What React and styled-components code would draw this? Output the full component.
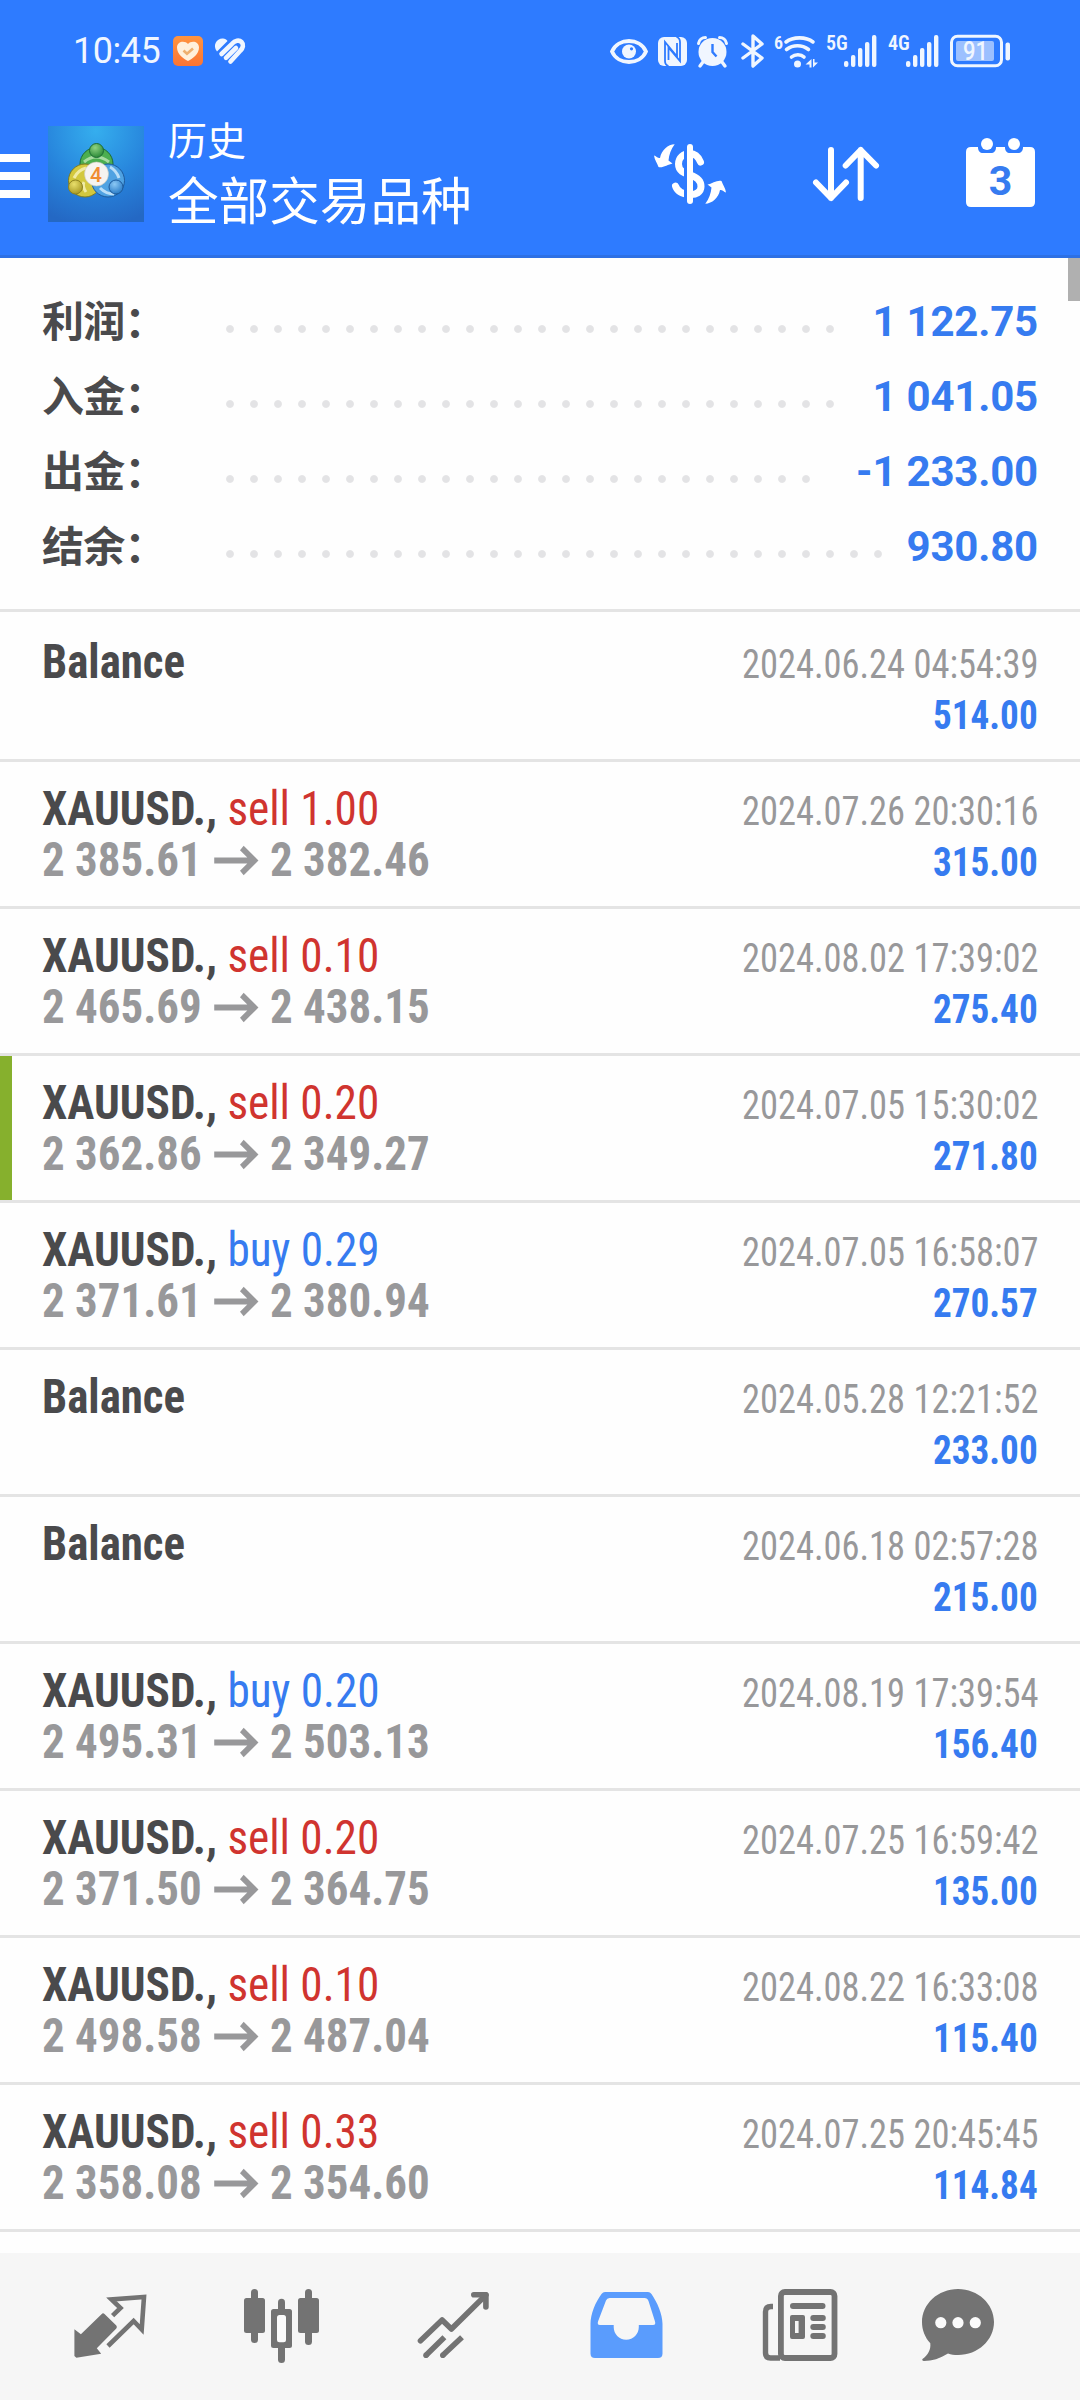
import styled, { createGlobalStyle } from "styled-components";

const GlobalStyle = createGlobalStyle`
  * {
    box-sizing: border-box;
  }
  body {
    margin: 0;
    background: #fefefe;
    font-family: Roboto, "Noto Sans CJK SC", sans-serif;
  }
  svg {
    display: block;
    flex-shrink: 0;
    overflow: visible;
  }
`;

const Page = styled.div`
  width: 1080px;
  height: 2400px;
  display: flex;
  flex-direction: column;
  overflow: hidden;
`;

/* header */
const Header = styled.header`
  height: 258px;
  background: #2e7bff;
  border-bottom: 3px solid #2d70e4;
  color: #fff;
`;
const StatusBar = styled.div`
  height: 102px;
  display: flex;
  align-items: center;
  justify-content: space-between;
  padding: 0 70px 0 73px;
  color: #f0f6ff;
`;
const StatusGroup = styled.div`
  display: flex;
  align-items: center;
  gap: ${(props) => props.$gap}px;
`;
const Clock = styled.span`
  width: 89px;
  font-size: 36px;
  line-height: 40px;
  letter-spacing: -0.5px;
  white-space: nowrap;
`;
const Toolbar = styled.div`
  height: 144px;
  display: flex;
  align-items: center;
  padding-right: 45px;
`;
const MenuButton = styled.div`
  width: 30px;
  height: 44px;
  margin: 4px 18px 0 0;
  display: flex;
  flex-direction: column;
  justify-content: space-between;
`;
const MenuLine = styled.span`
  height: 8px;
  background: #fff;
`;
const Titles = styled.div`
  display: flex;
  flex-direction: column;
  flex: 1;
  margin: 0 0 5px 24px;
  font-family: "Noto Sans CJK SC", sans-serif;
`;
const Title = styled.div`
  font-size: 39px;
  line-height: 52px;
  font-weight: 400;
`;
const Subtitle = styled.div`
  font-size: 50.6px;
  line-height: 68px;
  font-weight: 400;
`;
const Actions = styled.div`
  display: flex;
  align-items: center;
  gap: 87px;
`;

/* summary */
const Summary = styled.section`
  position: relative;
  height: 354px;
  padding: 26px 42px 0 42px;
  border-bottom: 3px solid #e4e4e4;
`;
const ScrollThumb = styled.div`
  position: absolute;
  top: 0;
  right: 0;
  width: 12px;
  height: 43px;
  background: #b0b0b0;
`;
const SummaryRow = styled.div`
  height: 75px;
  display: flex;
  align-items: center;
`;
const SummaryLabel = styled.div`
  width: 176px;
  padding-bottom: 6px;
  font-family: "Noto Sans CJK SC", sans-serif;
  font-size: 42px;
  line-height: 60px;
  letter-spacing: -0.7px;
  font-weight: 700;
  color: #4a4a4c;
`;
const Dots = styled.div`
  width: ${(props) => props.$count * 24}px;
  height: 10px;
  margin: 14px auto 0 0;
  background: radial-gradient(circle at center, #e3e3e5 3.4px, transparent 4.4px) 0 0 / 24px 10px;
`;
const SummaryValue = styled.div`
  font-size: 42px;
  line-height: 50px;
  letter-spacing: -0.2px;
  font-weight: 700;
  color: #367bf0;
`;

/* deals */
const List = styled.main`
  height: 1641px;
  flex-shrink: 0;
`;
const Deal = styled.article`
  height: ${(props) => (props.$first ? 150 : 147)}px;
  padding: ${(props) => (props.$first ? 21 : 18)}px 42px 0 42px;
  display: flex;
  justify-content: space-between;
  border-bottom: 3px solid #e4e4e4;
  background: ${(props) =>
    props.$marked ? "linear-gradient(to right, #86b02d 12px, transparent 12px)" : "none"};
`;
const Column = styled.div`
  display: flex;
  flex-direction: column;
  align-items: ${(props) => (props.$right ? "flex-end" : "flex-start")};
  font-stretch: 75%;
  white-space: pre;
`;
const Line = styled.div`
  line-height: 51px;
  transform: scaleX(${(props) => props.$squeeze});
  transform-origin: ${(props) => (props.$right ? "right" : "left")} center;
`;
const Symbol = styled(Line)`
  font-size: 48px;
  padding-top: 3px;
  font-weight: 700;
  color: #4a4a4c;
`;
const Side = styled.span`
  font-weight: 400;
  color: ${(props) => (props.$side === "buy" ? "#367bf0" : "#d0342f")};
`;
const Prices = styled(Line)`
  display: flex;
  align-items: center;
  gap: 13px;
  font-size: 48px;
  font-weight: 700;
  color: #98989a;
`;
const Time = styled(Line)`
  font-size: 40px;
  padding-top: 6px;
  color: #98989a;
`;
const Amount = styled(Line)`
  font-size: 40px;
  font-weight: 700;
  color: #367bf0;
`;

/* bottom tabs */
const TabBar = styled.nav`
  margin-top: auto;
  height: 147px;
  flex-shrink: 0;
  padding: 0 24px;
  display: flex;
  background: #f6f6f6;
`;
const Tab = styled.div`
  width: 172px;
  padding-top: 25px;
  display: flex;
  justify-content: center;
  color: ${(props) => (props.$active ? "#5a9cfd" : "#737373")};
`;

const summary = [
  { label: "利润：", value: "1 122.75", dots: 26 },
  { label: "入金：", value: "1 041.05", dots: 26 },
  { label: "出金：", value: "-1 233.00", dots: 25 },
  { label: "结余：", value: "930.80", dots: 28 },
];

const deals = [
  { time: "2024.06.24 04:54:39", amount: "514.00" },
  { side: "sell", lots: "1.00", from: "2 385.61", to: "2 382.46", time: "2024.07.26 20:30:16", amount: "315.00" },
  { side: "sell", lots: "0.10", from: "2 465.69", to: "2 438.15", time: "2024.08.02 17:39:02", amount: "275.40" },
  { side: "sell", lots: "0.20", from: "2 362.86", to: "2 349.27", time: "2024.07.05 15:30:02", amount: "271.80", marked: true },
  { side: "buy", lots: "0.29", from: "2 371.61", to: "2 380.94", time: "2024.07.05 16:58:07", amount: "270.57" },
  { time: "2024.05.28 12:21:52", amount: "233.00" },
  { time: "2024.06.18 02:57:28", amount: "215.00" },
  { side: "buy", lots: "0.20", from: "2 495.31", to: "2 503.13", time: "2024.08.19 17:39:54", amount: "156.40" },
  { side: "sell", lots: "0.20", from: "2 371.50", to: "2 364.75", time: "2024.07.25 16:59:42", amount: "135.00" },
  { side: "sell", lots: "0.10", from: "2 498.58", to: "2 487.04", time: "2024.08.22 16:33:08", amount: "115.40" },
  { side: "sell", lots: "0.33", from: "2 358.08", to: "2 354.60", time: "2024.07.25 20:45:45", amount: "114.84" },
];

const HealthIcon = () => (
  <svg width="30" height="30" viewBox="0 0 30 30">
    <defs>
      <linearGradient id="health" x1="0" y1="0" x2="0" y2="1">
        <stop offset="0" stopColor="#ff9440" />
        <stop offset="1" stopColor="#fb7434" />
      </linearGradient>
    </defs>
    <rect width="30" height="30" rx="5" fill="url(#health)" />
    <path d="M15 25C10 22.5 4 18 4 11.500C4 5 12 4 15 8C18 4 26 5 26 11.500C26 18 20 22.500 15 25Z" fill="#fff0dc" />
    <path d="M10.500 14.500L14 17.800L20 12.500" fill="none" stroke="#eeb070" strokeWidth="2.600" />
  </svg>
);

const HeartStripes = () => (
  <svg width="32" height="27" viewBox="0 0 32 27">
    <path d="M3 13.500C-2 7 3 0 9 .500C11 .600 12.500 1.500 13.500 3Z" fill="currentColor" />
    <g fill="none" stroke="currentColor" strokeWidth="4.600" strokeLinecap="round">
      <path d="M7.500 16L18 5.800C21 2.500 25 1.500 27.500 4C30 6.500 29 10 26.500 12.500L16.500 23.500" />
      <path d="M12 19.800L22 10" />
    </g>
  </svg>
);

const EyeIcon = () => (
  <svg width="38" height="25" viewBox="0 0 38 25">
    <path d="M2 12.500C8 -1.500 30 -1.500 36 12.500C30 26.500 8 26.500 2 12.500Z" fill="none" stroke="currentColor" strokeWidth="3.800" />
    <circle cx="19" cy="12.500" r="7" fill="currentColor" />
    <circle cx="21.500" cy="9.800" r="1.600" fill="#2e7bff" />
  </svg>
);

const NfcIcon = () => (
  <svg width="29" height="29" viewBox="0 0 29 29">
    <rect width="29" height="29" rx="6" fill="currentColor" />
    <path d="M10.500 29Q7 28 7 24V5L19 19.500V6" fill="none" stroke="#2e7bff" strokeWidth="1.800" />
    <path d="M18.500 0Q22 1 22 5V24L10.500 10.500V23" fill="none" stroke="#2e7bff" strokeWidth="1.800" />
  </svg>
);

const AlarmIcon = () => (
  <svg width="31" height="31" viewBox="0 0 31 31">
    <circle cx="15.500" cy="16" r="14" fill="currentColor" />
    <path d="M1.500 7.500C2 4 5 1.500 8.500 1.500M29.500 7.500C29 4 26 1.500 22.500 1.500" fill="none" stroke="currentColor" strokeWidth="3" strokeLinecap="round" />
    <path d="M6 26L3 30M25 26L28 30" stroke="currentColor" strokeWidth="3.400" strokeLinecap="round" />
    <path d="M15.500 8V16L19.500 20.500" fill="none" stroke="#2e7bff" strokeWidth="2.400" />
  </svg>
);

const BluetoothIcon = () => (
  <svg width="26" height="34" viewBox="-3 0 26 34">
    <path d="M2 10L21 24L12 32V2L21 10L2 24" fill="none" stroke="currentColor" strokeWidth="3.400" strokeLinejoin="round" strokeLinecap="round" />
  </svg>
);

const StatusText = ({ x, y, size, children, fill = "currentColor" }) => (
  <text x={x} y={y} fontSize={size} fontFamily="Roboto, sans-serif" fontWeight="600" fontStretch="75%" fill={fill}>
    {children}
  </text>
);

const WifiIcon = () => (
  <svg width="42" height="33" viewBox="0 0 42 33">
    <StatusText x="0" y="14" size="18">6</StatusText>
    <g fill="none" stroke="currentColor" strokeWidth="3.600" strokeLinecap="round">
      <path d="M12 7C19 1.500 32 1.500 39 7" />
      <path d="M12.500 14.500C19 9.500 28 9.500 34.500 14.500" />
      <path d="M17.500 22C21 19 27 19 30 22" />
    </g>
    <circle cx="23.500" cy="29" r="3.500" fill="currentColor" />
    <path d="M37.500 24V32.500H35.500V29.500H31.500ZM39 32.500V24H40.500V27.500H44Z" fill="currentColor" />
  </svg>
);

const bars = [
  [20, 26, 6],
  [27, 20, 12],
  [34, 13, 19],
  [41, 7, 25],
  [48, 0, 32],
];

const SignalIcon = ({ label }) => (
  <svg width="52" height="33" viewBox="0 0 52 33">
    <StatusText x="0" y="15" size="20">{label}</StatusText>
    {bars.map(([x, y, h]) => (
      <rect key={x} x={x - 2} y={y} width="4.400" height={h} rx="2" fill="currentColor" />
    ))}
  </svg>
);

const BatteryIcon = () => (
  <svg width="60" height="32" viewBox="0 0 60 32">
    <rect x="1.500" y="1.200" width="50" height="29.600" rx="6" fill="none" stroke="currentColor" strokeWidth="3" />
    <rect x="6" y="6" width="38" height="20" rx="2" fill="#9cc0ff" />
    <rect x="55.500" y="7.500" width="4.500" height="18" rx="2" fill="currentColor" />
    <text x="25.500" y="25" fontSize="26" fontFamily="Roboto, sans-serif" fontWeight="500" textAnchor="middle" textLength="25" lengthAdjust="spacingAndGlyphs" fill="currentColor">
      91
    </text>
  </svg>
);

const AppLogo = () => (
  <svg width="96" height="96" viewBox="0 0 96 96">
    <defs>
      <radialGradient id="logoBg" cx=".5" cy=".05" r="1">
        <stop offset="0" stopColor="#35aeee" />
        <stop offset=".55" stopColor="#2784dc" />
        <stop offset="1" stopColor="#2468c4" />
      </radialGradient>
      <radialGradient id="logoGreen" cx=".4" cy=".3" r=".7">
        <stop offset="0" stopColor="#8fd382" />
        <stop offset="1" stopColor="#2c8a38" />
      </radialGradient>
      <radialGradient id="logoYellow" cx=".4" cy=".3" r=".7">
        <stop offset="0" stopColor="#e9df6c" />
        <stop offset="1" stopColor="#a89a24" />
      </radialGradient>
      <radialGradient id="logoBlue" cx=".4" cy=".3" r=".7">
        <stop offset="0" stopColor="#8cc8f4" />
        <stop offset="1" stopColor="#2a7cc8" />
      </radialGradient>
    </defs>
    <rect width="96" height="96" fill="url(#logoBg)" />
    <circle cx="48.500" cy="38" r="16.500" fill="#4cae50" stroke="#1d6c35" />
    <path d="M36 36Q48 26 61 36" fill="none" stroke="#a7dba0" strokeWidth="3" />
    <circle cx="37" cy="54.500" r="16.500" fill="#d3c83e" stroke="#7c7a22" />
    <path d="M26 52Q30 44 38 42M38 66Q34 60 36 56" fill="none" stroke="#f0eba4" strokeWidth="3" />
    <circle cx="60" cy="54.500" r="16.500" fill="#4fa2e2" stroke="#1d5a9c" />
    <path d="M71 52Q68 44 62 41M52 62Q58 68 66 68" fill="none" stroke="#b9def8" strokeWidth="3" />
    <circle cx="48.500" cy="24.500" r="7" fill="url(#logoGreen)" stroke="#1d6c35" />
    <circle cx="27.500" cy="61" r="7" fill="url(#logoYellow)" stroke="#8d821f" />
    <circle cx="68" cy="61" r="7" fill="url(#logoBlue)" stroke="#1d5a9c" />
    <circle cx="48.500" cy="48" r="12" fill="#f6f3f0" stroke="#c9c8bc" strokeWidth=".600" />
    <text x="48" y="55.500" fontSize="21" fontFamily="Roboto, sans-serif" fontWeight="500" textAnchor="middle" fill="#f08c32">
      4
    </text>
  </svg>
);

const CurrencyIcon = () => (
  <svg width="72" height="60" viewBox="14 9 72 60">
    <path
      d="M60.500 27C58 21 54 18.500 50 18.500C43 18.500 38.500 23 38.500 29C38.500 36 44 38 50 40C57 42 61 46 61 51.500C61 57 56 60 50 59.500C42 59 37 56 35.500 51"
      fill="none"
      stroke="#fff"
      strokeWidth="7"
      strokeLinecap="round"
    />
    <rect x="44" y="9" width="3" height="60" fill="#2e7bff" />
    <rect x="47" y="9" width="6" height="60" rx="3" fill="#fff" />
    <path id="swap" d="M34.700 9.300C28 9.500 21.500 15 20 23C18 23.500 16 21 14 20.500C14.500 24.500 17 28 18.500 32C22 33.500 28 29.500 32.500 28.500L28.500 25.500C29 20 31 14 34.700 9.300Z" fill="#fff" />
    <use href="#swap" transform="rotate(180 50 39)" />
  </svg>
);

const SortIcon = () => (
  <svg width="66" height="54" viewBox="173 12 66 54">
    <path
      d="M191 15V63M176 47.500L191 63L206 47.500M220.700 63V15M205.700 30.500L220.700 15L236 30.500"
      fill="none"
      stroke="#fff"
      strokeWidth="6"
      strokeLinecap="round"
      strokeLinejoin="round"
    />
  </svg>
);

const CalendarIcon = () => (
  <svg width="69" height="72" viewBox="0 0 69 72">
    <path d="M5 9H12C12 13 14 15 17 15H25C28 15 30 13 30 9H39C39 13 41 15 44 15H52C55 15 57 13 57 9H64Q69 9 69 14V64Q69 69 64 69H5Q0 69 0 64V14Q0 9 5 9Z" fill="#fff" />
    <circle cx="21" cy="6" r="6" fill="#fff" />
    <circle cx="48" cy="6" r="6" fill="#fff" />
    <text x="34.500" y="56.500" fontSize="41" fontFamily="Roboto, sans-serif" fontWeight="700" textAnchor="middle" fill="#367bf0">
      3
    </text>
  </svg>
);

const ArrowIcon = () => (
  <svg width="47" height="30" viewBox="0 0 47 30">
    <path d="M0 15.500H43M29.500 3L43 15.500L29.500 28" fill="none" stroke="currentColor" strokeWidth="5.800" />
  </svg>
);

const TabIcon = ({ children }) => (
  <svg width="96" height="96" viewBox="0 0 96 96" fill="currentColor">
    {children}
  </svg>
);

const QuotesIcon = () => (
  <TabIcon>
    <path d="M12.400 51.300L18.900 56.300L39.500 36.300Q41 34.500 42.500 36L54.300 47.500Q55.500 49 54.300 50.500L34.800 70.300L39.200 75.700L14.400 79.700L12.400 78Z" />
    <path d="M50.600 37.700L58.500 30L49.500 21.500L82 19L79.700 51.500L71.600 43L46 68" fill="none" stroke="currentColor" strokeWidth="4.600" />
  </TabIcon>
);

const ChartIcon = () => (
  <TabIcon>
    <rect x="17" y="11" width="7" height="54" rx="3.500" />
    <rect x="10" y="20" width="21" height="35" rx="2.500" />
    <rect x="71" y="11" width="7" height="56" rx="3.500" />
    <rect x="64" y="20" width="21" height="35" rx="2.500" />
    <rect x="44" y="20.700" width="7" height="64.300" rx="3.500" />
    <rect x="37" y="31" width="21" height="39" rx="2.500" />
    <rect x="43" y="37" width="9" height="27.300" rx="2.500" fill="#fbfbfb" />
  </TabIcon>
);

const TradeIcon = () => (
  <TabIcon>
    <g fill="none" stroke="currentColor" strokeWidth="5.600" strokeLinecap="round" strokeLinejoin="round">
      <path d="M14.500 62.700L36.100 42L45.400 51L79.900 17" />
      <path d="M67.800 16.800H79.900V29" />
    </g>
    <g fill="none" stroke="currentColor" strokeWidth="5.600">
      <path d="M20 77.300L38.400 59.300M36.800 77.300L56 59.300" />
    </g>
    <circle cx="20" cy="77.300" r="2.800" />
    <circle cx="36.800" cy="77.300" r="2.800" />
  </TabIcon>
);

const HistoryIcon = () => (
  <TabIcon>
    <path
      fillRule="evenodd"
      d="M27 14H70Q72 14 73.500 16C79 24 84.500 36 84.500 46V75.500Q84.500 80 80 80H17Q12.500 80 12.500 75.500V46C12.500 36 17.500 24 23.500 16Q25 14 27 14ZM31.500 20Q29 20 28 22.500L20 43.500Q19 47 22 47H35.700V49C35.700 56 41 61.700 48.200 61.700S60.800 56 60.800 49V47H75Q78 47 77 43.500L70.500 23Q69.500 20 66.500 20Z"
    />
  </TabIcon>
);

const NewsIcon = () => (
  <TabIcon>
    <rect x="30.900" y="14" width="53.600" height="66" rx="4" fill="none" stroke="currentColor" strokeWidth="5.800" />
    <path d="M23 28.500H21Q15.500 28.500 15.500 34V75Q15.500 80 20.500 80H30" fill="none" stroke="currentColor" strokeWidth="5.400" />
    <rect x="40" y="25" width="35.500" height="6" rx="3" />
    <path fillRule="evenodd" d="M42 37H53Q55 37 55 39V59Q55 61 53 61H42Q40 61 40 59V39Q40 37 42 37ZM45 43V55H48.600V43Z" />
    <rect x="60.300" y="37" width="15.500" height="6" rx="3" />
    <rect x="60.300" y="46" width="15.500" height="6" rx="3" />
    <rect x="60.300" y="55" width="15.500" height="6" rx="3" />
  </TabIcon>
);

const ChatIcon = () => (
  <TabIcon>
    <path d="M36 11C56 11 72 26 72 44S56 77 36 77C32 77 29 76.500 26 75.500C18 80.500 10 83 2 83Q-.500 82.500 .500 81C6 77 9 72 8.300 65.300C3 59.500 0 52 0 44C0 26 16 11 36 11Z" />
    <circle cx="18.800" cy="44.700" r="5.600" fill="#fbfbfb" />
    <circle cx="36" cy="44.700" r="5.600" fill="#fbfbfb" />
    <circle cx="53.300" cy="44.700" r="5.600" fill="#fbfbfb" />
  </TabIcon>
);

const DealRow = ({ deal, first }) => (
  <Deal $first={first} $marked={deal.marked}>
    <Column>
      {deal.side ? (
        <>
          <Symbol $squeeze={0.942}>
            XAUUSD., <Side $side={deal.side}>{deal.side} {deal.lots}</Side>
          </Symbol>
          <Prices $squeeze={0.936}>
            <span>{deal.from}</span>
            <ArrowIcon />
            <span>{deal.to}</span>
          </Prices>
        </>
      ) : (
        <Symbol $squeeze={0.935}>Balance</Symbol>
      )}
    </Column>
    <Column $right>
      <Time $right $squeeze={0.911}>{deal.time}</Time>
      <Amount $right $squeeze={0.93}>{deal.amount}</Amount>
    </Column>
  </Deal>
);

const App = () => {
  return (
    <Page>
      <GlobalStyle />
      <Header>
        <StatusBar>
          <StatusGroup $gap={11}>
            <Clock>10:45</Clock>
            <HealthIcon />
            <HeartStripes />
          </StatusGroup>
          <StatusGroup $gap={10}>
            <EyeIcon />
            <NfcIcon />
            <AlarmIcon />
            <BluetoothIcon />
            <WifiIcon />
            <SignalIcon label="5G" />
            <SignalIcon label="4G" />
            <BatteryIcon />
          </StatusGroup>
        </StatusBar>
        <Toolbar>
          <MenuButton>
            <MenuLine />
            <MenuLine />
            <MenuLine />
          </MenuButton>
          <AppLogo />
          <Titles>
            <Title>历史</Title>
            <Subtitle>全部交易品种</Subtitle>
          </Titles>
          <Actions>
            <CurrencyIcon />
            <SortIcon />
            <CalendarIcon />
          </Actions>
        </Toolbar>
      </Header>

      <Summary>
        <ScrollThumb />
        {summary.map((item) => (
          <SummaryRow key={item.label}>
            <SummaryLabel>{item.label}</SummaryLabel>
            <Dots $count={item.dots} />
            <SummaryValue>{item.value}</SummaryValue>
          </SummaryRow>
        ))}
      </Summary>

      <List>
        {deals.map((deal, i) => (
          <DealRow key={deal.time} deal={deal} first={i === 0} />
        ))}
      </List>

      <TabBar>
        <Tab><QuotesIcon /></Tab>
        <Tab><ChartIcon /></Tab>
        <Tab><TradeIcon /></Tab>
        <Tab $active><HistoryIcon /></Tab>
        <Tab><NewsIcon /></Tab>
        <Tab><ChatIcon /></Tab>
      </TabBar>
    </Page>
  );
};

export default App;
